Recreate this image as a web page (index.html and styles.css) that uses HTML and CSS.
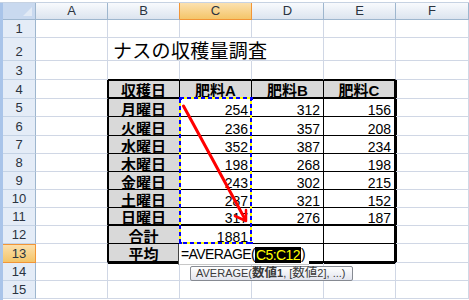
FILE: index.html
```html
<!DOCTYPE html>
<html lang="ja">
<head>
<meta charset="utf-8">
<title>ナスの収穫量調査</title>
<link rel="stylesheet" href="styles.css">
</head>
<body>
<div class="app">
  <div class="topbar"></div>
  <div class="main">
    <div class="strip"></div>
    <div class="sheet">
      <!-- column headers -->
      <div class="corner"></div>
      <div class="ch">A</div>
      <div class="ch pre">B</div>
      <div class="ch sel">C</div>
      <div class="ch">D</div>
      <div class="ch">E</div>
      <div class="ch">F</div>
      <!-- row 1 -->
      <div class="rh">1</div>
      <div class="c"></div><div class="c"></div><div class="c"></div><div class="c"></div><div class="c"></div><div class="c"></div>
      <!-- row 2 -->
      <div class="rh">2</div>
      <div class="c"></div>
      <div class="c nob title">ナスの収穫量調査</div>
      <div class="c nob"></div>
      <div class="c"></div><div class="c"></div><div class="c"></div>
      <!-- row 3 -->
      <div class="rh">3</div>
      <div class="c"></div>
      <div class="c tt"></div><div class="c tt"></div><div class="c tt"></div><div class="c tt"></div>
      <div class="c"></div>
      <!-- row 4 -->
      <div class="rh">4</div>
      <div class="c ar"></div>
      <div class="c t g tk blt">収穫日</div>
      <div class="c t g tk bt">肥料A</div>
      <div class="c t g tk bt">肥料B</div>
      <div class="c t g tk bt er">肥料C</div>
      <div class="c bl"></div>
      <!-- row 5 -->
      <div class="rh">5</div>
      <div class="c ar"></div>
      <div class="c t g bl">月曜日</div>
      <div class="c t n">254</div>
      <div class="c t n">312</div>
      <div class="c t n er">156</div>
      <div class="c bl"></div>
      <!-- row 6 -->
      <div class="rh">6</div>
      <div class="c ar"></div>
      <div class="c t g bl">火曜日</div>
      <div class="c t n">236</div>
      <div class="c t n">357</div>
      <div class="c t n er">208</div>
      <div class="c bl"></div>
      <!-- row 7 -->
      <div class="rh">7</div>
      <div class="c ar"></div>
      <div class="c t g bl">水曜日</div>
      <div class="c t n">352</div>
      <div class="c t n">387</div>
      <div class="c t n er">234</div>
      <div class="c bl"></div>
      <!-- row 8 -->
      <div class="rh">8</div>
      <div class="c ar"></div>
      <div class="c t g bl">木曜日</div>
      <div class="c t n">198</div>
      <div class="c t n">268</div>
      <div class="c t n er">198</div>
      <div class="c bl"></div>
      <!-- row 9 -->
      <div class="rh">9</div>
      <div class="c ar"></div>
      <div class="c t g bl">金曜日</div>
      <div class="c t n">243</div>
      <div class="c t n">302</div>
      <div class="c t n er">215</div>
      <div class="c bl"></div>
      <!-- row 10 -->
      <div class="rh">10</div>
      <div class="c ar"></div>
      <div class="c t g bl">土曜日</div>
      <div class="c t n">287</div>
      <div class="c t n">321</div>
      <div class="c t n er">152</div>
      <div class="c bl"></div>
      <!-- row 11 -->
      <div class="rh">11</div>
      <div class="c ar"></div>
      <div class="c t g bl tk">日曜日</div>
      <div class="c t n tk">317</div>
      <div class="c t n tk">276</div>
      <div class="c t n tk er">187</div>
      <div class="c bl"></div>
      <!-- row 12 -->
      <div class="rh">12</div>
      <div class="c ar"></div>
      <div class="c t g bl">合計</div>
      <div class="c t n">1881</div>
      <div class="c t"></div>
      <div class="c t er"></div>
      <div class="c bl"></div>
      <!-- row 13 -->
      <div class="rh sel">13</div>
      <div class="c ar"></div>
      <div class="c t g bl tk">平均</div>
      <div class="c t tk"></div>
      <div class="c t tk"></div>
      <div class="c t tk er"></div>
      <div class="c bl"></div>
      <!-- row 14 -->
      <div class="rh">14</div>
      <div class="c"></div>
      <div class="c bt"></div><div class="c bt"></div><div class="c bt"></div><div class="c bt"></div>
      <div class="c"></div>
      <!-- row 15 -->
      <div class="rh">15</div>
      <div class="c"></div><div class="c"></div><div class="c"></div><div class="c"></div><div class="c"></div><div class="c"></div>
    </div>
  </div>

  <svg class="overlay" width="469" height="300" viewBox="0 0 469 300" aria-hidden="true">
    <rect x="180" y="98" width="71" height="145" fill="none" stroke="#ffff00" stroke-width="2"/>
    <rect x="180" y="98" width="71" height="145" fill="none" stroke="#0000ff" stroke-width="2" stroke-dasharray="4 3"/>
    <rect x="179" y="97" width="3" height="3" fill="#0000ff"/>
    <rect x="250" y="97" width="3" height="3" fill="#0000ff"/>
    <rect x="179" y="242" width="3" height="3" fill="#0000ff"/>
    <rect x="250" y="242" width="3" height="3" fill="#0000ff"/>
    <line x1="183.5" y1="106" x2="245.5" y2="220" stroke="#ff0000" stroke-width="3" stroke-linecap="round"/>
    <polyline points="235,216 246,221 246,210" fill="none" stroke="#ff0000" stroke-width="2.5" stroke-linejoin="round" stroke-linecap="round"/>
  </svg>

  <div class="editor"><span class="ftxt">=AVERAGE(</span><span class="fref">C5:C12</span><span class="ftxt">)</span></div>
  <div class="tip">AVERAGE(<b class="cjk">数値</b><b>1</b>, [<span class="cjk">数値</span>2], ...)</div>
</div>
</body>
</html>
```
FILE: styles.css
```css
* {
  box-sizing: border-box;
  margin: 0;
  padding: 0;
}

body {
  margin: 0;
  width: 469px;
  height: 300px;
  overflow: hidden;
  background: #ffffff;
  font-family: "Liberation Sans", Arial, sans-serif;
}

.app {
  position: relative;
  width: 469px;
  height: 300px;
}

.topbar {
  height: 3px;
  background: #ffffff;
  border-bottom: 1px solid #c6d2e2;
}

.main {
  display: flex;
}

.strip {
  width: 3px;
  height: 297px;
  background: #a9c4e9;
}

.sheet {
  display: grid;
  grid-template-columns: 33px 72px 72px 72px 72px 72px 73px;
  grid-template-rows: 17px 18px 23px 19px 19px 18px 19px 18px 18px 18px 18px 18px 18px 19px 18px 18px;
}

.corner {
  position: relative;
  background: #c9d9ef;
  border-right: 1px solid #9eb6ce;
  border-bottom: 1px solid #9eb6ce;
}

.corner::after {
  content: "";
  position: absolute;
  right: 3px;
  bottom: 3px;
  width: 9px;
  height: 9px;
  background: #e2eaf5;
  clip-path: polygon(100% 0, 100% 100%, 0 100%);
}

.ch {
  display: flex;
  align-items: flex-end;
  justify-content: center;
  padding-bottom: 2px;
  font-size: 13px;
  line-height: 1;
  color: #2a3340;
  background: linear-gradient(#f8fafd 0%, #eaeff6 50%, #dce4ef 100%);
  border-right: 1px solid #9eb6ce;
  border-bottom: 1px solid #9eb6ce;
}

.ch.pre {
  border-right-color: #f29536;
}

.ch.sel {
  background: linear-gradient(#fbe1b0 0%, #f8d38c 50%, #f4c569 100%);
  border-right-color: #f29536;
  border-bottom-color: #f29536;
}

.rh {
  display: flex;
  align-items: flex-end;
  justify-content: center;
  padding-bottom: 2px;
  font-size: 13px;
  line-height: 1;
  color: #2a3340;
  background: #e4ecf7;
  border-right: 1px solid #9eb6ce;
  border-bottom: 1px solid #c5d3e5;
}

.rh.sel {
  background: linear-gradient(#fbe1b0 0%, #f8d38c 50%, #f4c569 100%);
  border-right-color: #f29536;
  border-bottom-color: #f29536;
  box-shadow: inset 0 1px #f29536;
}

.c {
  display: flex;
  align-items: flex-end;
  white-space: nowrap;
  overflow: visible;
  font-size: 14px;
  line-height: 1;
  color: #000000;
  border-right: 1px solid #d0d7e5;
  border-bottom: 1px solid #d0d7e5;
}

.nob {
  border-right-color: transparent;
}

.title {
  position: relative;
  z-index: 1;
  padding-left: 5px;
  padding-bottom: 0;
  font-family: "Liberation Sans", "Noto Sans CJK JP", sans-serif;
  font-size: 19px;
  letter-spacing: 0.3px;
  line-height: 17px;
}

.t {
  border-right-color: #000000;
  border-bottom-color: #000000;
}

.tt {
  border-bottom-color: #000000;
}

.ar {
  border-right-color: #000000;
}

.er {
  border-right-width: 2px;
}

.tk {
  border-bottom-width: 2px;
}

.bl {
  box-shadow: inset 1px 0 #000000;
}

.bt {
  box-shadow: inset 0 1px #000000;
}

.blt {
  box-shadow: inset 1px 0 #000000, inset 0 1px #000000;
}

.g {
  justify-content: center;
  background: #d9d9d9;
  font-family: "Liberation Sans", "Noto Sans CJK JP", sans-serif;
  font-weight: bold;
  font-size: 15px;
  line-height: 13px;
  padding-bottom: 0;
}

.n {
  justify-content: flex-end;
  padding-right: 3px;
  line-height: 11px;
}

.overlay {
  position: absolute;
  left: 0;
  top: 0;
  pointer-events: none;
}

.editor {
  position: absolute;
  left: 178px;
  top: 244px;
  width: 131px;
  height: 21px;
  background: #ffffff;
  border-left: 1px solid #444444;
  border-bottom: 1px solid #c8c8c8;
  display: flex;
  align-items: center;
  padding-left: 2px;
  font-size: 14px;
  letter-spacing: -0.6px;
  line-height: 16px;
  white-space: nowrap;
}

.ftxt {
  color: #000000;
}

.fref {
  display: inline-block;
  height: 16px;
  margin-top: 2px;
  padding: 0 1px;
  background: #000000;
  color: #ffff00;
}

.tip {
  position: absolute;
  left: 190px;
  top: 266px;
  width: 163px;
  height: 15px;
  padding-left: 5px;
  border: 1px solid #868a92;
  border-radius: 2px;
  background: linear-gradient(#ffffff, #e2e4ee);
  font-size: 11px;
  line-height: 13px;
  color: #3a3a3a;
  white-space: nowrap;
}

.tip .cjk {
  font-family: "Liberation Sans", "Noto Sans CJK JP", sans-serif;
  font-size: 12.5px;
}

.tip b {
  font-weight: bold;
}
```
